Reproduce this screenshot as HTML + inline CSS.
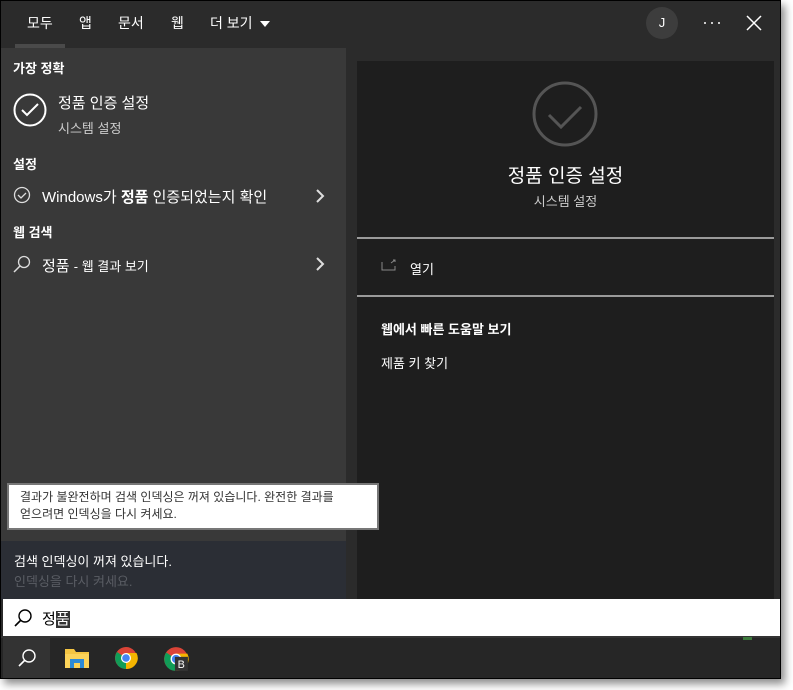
<!DOCTYPE html>
<html><head><meta charset="utf-8">
<style>
*{margin:0;padding:0;box-sizing:border-box}
body{width:793px;height:690px;background:#fff;font-family:"Liberation Sans","Noto Sans CJK KR",sans-serif;position:relative;overflow:hidden}
.win{position:absolute;left:0;top:0;width:781px;height:679px;background:#2b2b2b;border:1px solid #000;box-shadow:4px 5px 8px rgba(0,0,0,.45);overflow:hidden}
.abs{position:absolute}
.top{left:0;top:0;width:781px;height:47px;background:#2b2b2b}
.tab{position:absolute;top:12px;color:#fff;font-size:14px}
.left{left:0;top:47px;width:345px;height:552px;background:#393939}
.card{left:356px;top:60px;width:417px;height:539px;background:#1e1e1e}
.hdr{color:#fff;font-size:13px;font-weight:bold}
.t{color:#fff;font-size:15px}
.s{color:#ccc;font-size:13px}
</style></head><body>
<div class="win">
 <div class="abs top">
  <div class="tab" style="left:26px">모두</div>
  <div class="abs" style="left:14px;top:43px;width:50px;height:4px;background:#4a4a4a"></div>
  <div class="tab" style="left:78px">앱</div>
  <div class="tab" style="left:117px">문서</div>
  <div class="tab" style="left:170px">웹</div>
  <div class="tab" style="left:209px">더 보기</div>
  <svg class="abs" style="left:258px;top:19px" width="12" height="8"><path d="M1 1h10L6 7z" fill="#fff"/></svg>
  <div class="abs" style="left:645px;top:6px;width:32px;height:32px;border-radius:50%;background:#3d3d3d;color:#fff;font-size:13px;text-align:center;line-height:32px">J</div>
  <svg class="abs" style="left:702px;top:20px" width="18" height="4"><circle cx="2" cy="2" r="1" fill="#fff"/><circle cx="9" cy="2" r="1" fill="#fff"/><circle cx="16" cy="2" r="1" fill="#fff"/></svg>
  <svg class="abs" style="left:745px;top:14px" width="16" height="16"><path d="M1 1L15 15M15 1L1 15" stroke="#fff" stroke-width="1.5"/></svg>
 </div>
 <div class="abs left">
  <div class="abs hdr" style="left:12px;top:10px">가장 정확</div>
  <svg class="abs" style="left:12px;top:45px" width="34" height="34"><circle cx="17" cy="17" r="15.5" fill="none" stroke="#fff" stroke-width="2"/><path d="M9 17l5 5 11-11" fill="none" stroke="#fff" stroke-width="2"/></svg>
  <div class="abs t" style="left:57px;top:44px">정품 인증 설정</div>
  <div class="abs s" style="left:57px;top:70px">시스템 설정</div>
  <div class="abs hdr" style="left:12px;top:106px">설정</div>
  <svg class="abs" style="left:12px;top:138px" width="18" height="18"><circle cx="9" cy="9" r="7.5" fill="none" stroke="#ddd" stroke-width="1.3"/><path d="M5 9l3 3 5-5" fill="none" stroke="#ddd" stroke-width="1.3"/></svg>
  <div class="abs t" style="left:41px;top:138px">Windows가 <b>정품</b> 인증되었는지 확인</div>
  <svg class="abs" style="left:314px;top:141px" width="10" height="14"><path d="M2 1l6 6-6 6" fill="none" stroke="#ddd" stroke-width="2"/></svg>
  <div class="abs hdr" style="left:12px;top:174px">웹 검색</div>
  <svg class="abs" style="left:12px;top:207px" width="18" height="18"><circle cx="11" cy="7" r="5.5" fill="none" stroke="#ddd" stroke-width="1.3"/><path d="M7 11L1 17" stroke="#ddd" stroke-width="1.5"/></svg>
  <div class="abs t" style="left:41px;top:207px">정품 <span style="font-size:13px">- 웹 결과 보기</span></div>
  <svg class="abs" style="left:314px;top:209px" width="10" height="14"><path d="M2 1l6 6-6 6" fill="none" stroke="#ddd" stroke-width="2"/></svg>
  <div class="abs" style="left:0;top:493px;width:345px;height:59px;background:#2b2e35"></div>
  <div class="abs" style="left:13px;top:503px;color:#fff;font-size:13px">검색 인덱싱이 꺼져 있습니다.</div>
  <div class="abs" style="left:13px;top:523px;color:#5a5d64;font-size:13px">인덱싱을 다시 켜세요.</div>
 </div>
 <div class="abs card">
  <svg class="abs" style="left:175px;top:20px" width="66" height="66"><circle cx="33" cy="33" r="31" fill="none" stroke="#555" stroke-width="3"/><path d="M17 34l12 12 20-20" fill="none" stroke="#555" stroke-width="3"/></svg>
  <div class="abs" style="left:0;top:100px;width:417px;text-align:center;color:#fff;font-size:19px">정품 인증 설정</div>
  <div class="abs" style="left:0;top:130px;width:417px;text-align:center;color:#ccc;font-size:13px">시스템 설정</div>
  <div class="abs" style="left:0;top:176px;width:417px;height:2px;background:#9a9a9a"></div>
  <svg class="abs" style="left:24px;top:198px" width="16" height="12"><path d="M1 3v8h13V7" fill="none" stroke="#888" stroke-width="1"/><path d="M10 4l4-3M12 1h2v2" fill="none" stroke="#888"/></svg>
  <div class="abs" style="left:53px;top:198px;color:#fff;font-size:13px">열기</div>
  <div class="abs" style="left:0;top:234px;width:417px;height:2px;background:#9a9a9a"></div>
  <div class="abs" style="left:24px;top:258px;color:#fff;font-size:13px;font-weight:bold">웹에서 빠른 도움말 보기</div>
  <div class="abs" style="left:24px;top:292px;color:#fff;font-size:13px">제품 키 찾기</div>
 </div>
 <div class="abs" style="left:6px;top:482px;width:372px;height:47px;background:#fff;border:2px solid #777;padding:4px 0 0 11px;color:#333;font-size:12px;line-height:17px;z-index:5">결과가 불완전하며 검색 인덱싱은 꺼져 있습니다. 완전한 결과를<br>얻으려면 인덱싱을 다시 켜세요.</div>
 <div class="abs" style="left:2px;top:598px;width:778px;height:37px;background:#fff"></div>
 <svg class="abs" style="left:12px;top:607px" width="20" height="20"><circle cx="12" cy="8" r="6" fill="none" stroke="#000" stroke-width="1.4"/><path d="M8 12L2 18" stroke="#000" stroke-width="1.6"/></svg>
 <div class="abs" style="left:41px;top:607px;color:#000;font-size:15px">정<span style="background:#333;color:#fff">품</span></div>
 <div class="abs" style="left:0;top:635px;width:781px;height:44px;background:#262626;border-top:2px solid #333"></div>
 <div class="abs" style="left:742px;top:636px;width:9px;height:3px;background:#3d7a3d"></div>
 <div class="abs" style="left:2px;top:637px;width:47px;height:42px;background:#333"></div>
 <svg class="abs" style="left:15px;top:647px" width="22" height="22"><circle cx="13" cy="8" r="6" fill="none" stroke="#fff" stroke-width="1.4"/><path d="M9 12L3 18" stroke="#fff" stroke-width="1.6"/></svg>
 <svg class="abs" style="left:64px;top:647px" width="24" height="20"><path d="M0 1h9l2 3h13v16H0z" fill="#f5c542"/><rect x="0" y="6" width="24" height="14" fill="#fcd35a"/><rect x="5" y="11" width="14" height="9" fill="#2d8ad6"/><rect x="9" y="15" width="6" height="5" fill="#fcd35a"/></svg>
 <svg class="abs" style="left:113px;top:645px" width="24" height="24" viewBox="0 0 24 24"><circle cx="12" cy="12" r="11" fill="#db4437"/><path d="M12 12L2.5 17.5A11 11 0 0 0 12 23z" fill="#0f9d58"/><path d="M12 12L2.5 17.5A11 11 0 0 1 3 6z" fill="#0f9d58"/><path d="M12 12V23A11 11 0 0 0 22.5 7H12z" fill="#f4b400"/><circle cx="12" cy="12" r="5" fill="#fff"/><circle cx="12" cy="12" r="3.8" fill="#4285f4"/></svg>
 <svg class="abs" style="left:162px;top:645px" width="26" height="26" viewBox="0 0 24 24"><circle cx="12" cy="12" r="11" fill="#db4437"/><path d="M12 12L2.5 17.5A11 11 0 0 0 12 23z" fill="#0f9d58"/><path d="M12 12L2.5 17.5A11 11 0 0 1 3 6z" fill="#0f9d58"/><path d="M12 12V23A11 11 0 0 0 22.5 7H12z" fill="#f4b400"/><circle cx="12" cy="12" r="5" fill="#fff"/><circle cx="12" cy="12" r="3.8" fill="#4285f4"/><rect x="11" y="10" width="12" height="13" fill="#333"/><text x="13.5" y="20.5" font-size="10" fill="#fff" font-family="Liberation Sans">B</text></svg>
</div>
</body></html>
